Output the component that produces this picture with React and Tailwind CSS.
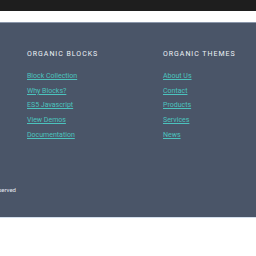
export default function App() {
  const blocks = ['Block Collection', 'Why Blocks?', 'ES5 Javascript', 'View Demos', 'Documentation'];
  const themes = ['About Us', 'Contact', 'Products', 'Services', 'News'];

  return (
    <div className="w-[256px] h-[256px] bg-white overflow-hidden" style={{ fontFamily: 'Roboto, "Liberation Sans", sans-serif' }}>
      <div className="h-[11px] bg-[#1e1e1e]" />
      <div className="h-[11px] bg-white" />
      <footer className="h-[196px] bg-[#4a5568] border-t border-[#8a96aa] border-b border-b-[#d3deec] flex flex-col">
        <div className="flex pt-[26px] pl-[27px]">
          <div className="w-[136px]">
            <h3 className="text-[7px] leading-[10px] tracking-[0.14em] text-[#edf2f7]">ORGANIC BLOCKS</h3>
            <ul className="mt-[12px] flex flex-col gap-[4.7px] text-[7px] leading-[10px]">
              {blocks.map((b) => (
                <li key={b}>
                  <a href="#" className="text-[#4cc3be] underline decoration-[#4cc3be]">{b}</a>
                </li>
              ))}
            </ul>
          </div>
          <div>
            <h3 className="text-[7px] leading-[10px] tracking-[0.14em] text-[#edf2f7]">ORGANIC THEMES</h3>
            <ul className="mt-[12px] flex flex-col gap-[4.7px] text-[7px] leading-[10px]">
              {themes.map((t) => (
                <li key={t}>
                  <a href="#" className="text-[#4cc3be] underline decoration-[#4cc3be]">{t}</a>
                </li>
              ))}
            </ul>
          </div>
        </div>
        <div className="mt-[46px] w-[16px] flex justify-end">
          <span className="whitespace-nowrap text-[6px] leading-[8px] text-[#e2e8f0]">© 2019 Organic Themes. All rights reserved</span>
        </div>
      </footer>
    </div>
  );
}
